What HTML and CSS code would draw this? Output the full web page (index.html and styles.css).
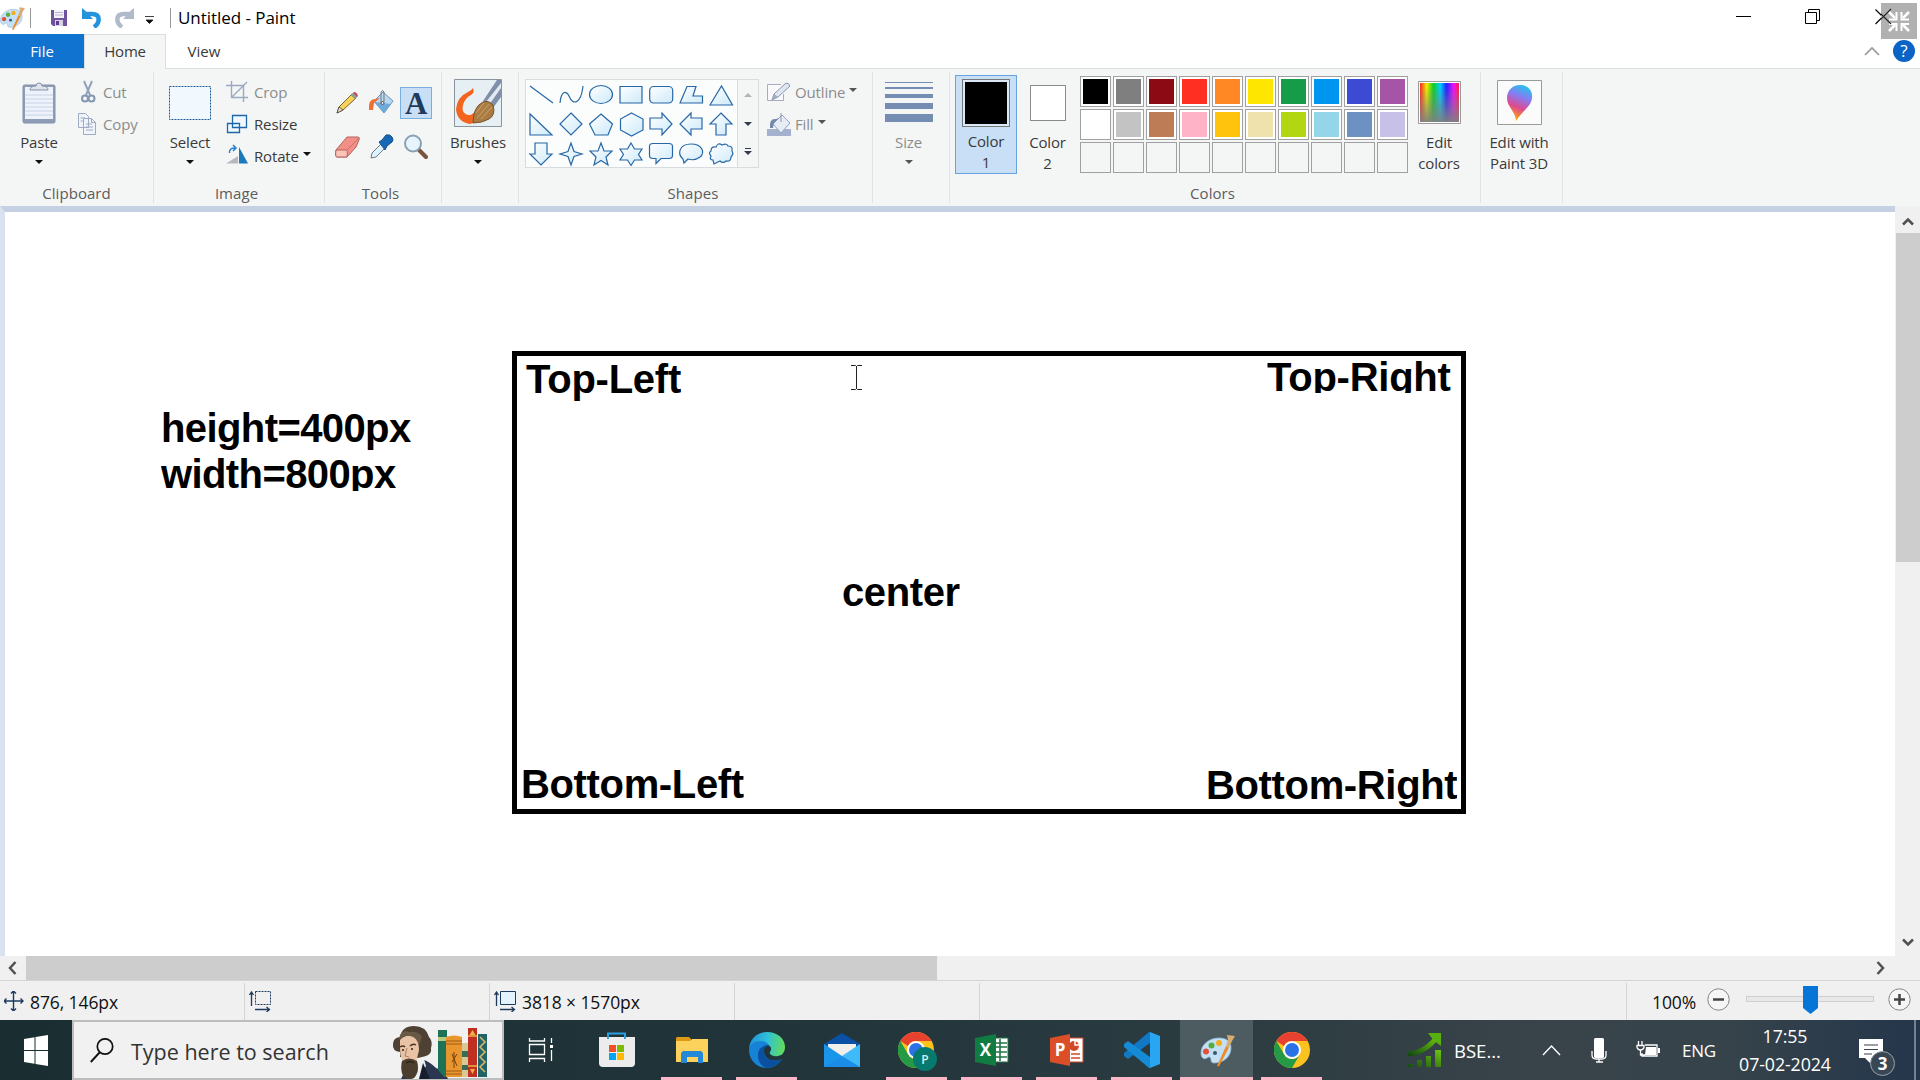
FILE: index.html
```html
<!DOCTYPE html>
<html lang="en">
<head>
<meta charset="utf-8">
<title>Untitled - Paint</title>
<link rel="stylesheet" href="styles.css">
</head>
<body>
<svg width="0" height="0" class="defs" aria-hidden="true">
  <defs>
    <linearGradient id="gShape" x1="0" y1="0" x2="1" y2="1"><stop offset="0" stop-color="#fff"/><stop offset="1" stop-color="#cdeafa"/></linearGradient>
    <linearGradient id="gEdge" x1="0" y1="0.3" x2="1" y2="0.4"><stop offset="0" stop-color="#1f8fd8"/><stop offset=".5" stop-color="#2fc0d8"/><stop offset="1" stop-color="#62dc5a"/></linearGradient>
    <linearGradient id="gGreen" x1="0" y1="1" x2="1" y2="0"><stop offset="0" stop-color="#144a12"/><stop offset="1" stop-color="#6cc80c"/></linearGradient>
    <linearGradient id="gRain" x1="0" y1="0" x2="1" y2="0"><stop offset="0" stop-color="#f22"/><stop offset=".17" stop-color="#ee0"/><stop offset=".34" stop-color="#1c2"/><stop offset=".52" stop-color="#0cf"/><stop offset=".68" stop-color="#22f"/><stop offset=".86" stop-color="#e1f"/><stop offset="1" stop-color="#f24"/></linearGradient>
    <linearGradient id="gFade" x1="0" y1="0" x2="0" y2="1"><stop offset=".1" stop-color="#808080" stop-opacity="0"/><stop offset="1" stop-color="#808080" stop-opacity=".95"/></linearGradient>
    <linearGradient id="gDrop" x1=".7" y1="0" x2=".4" y2="1"><stop offset="0" stop-color="#22c5ee"/><stop offset=".35" stop-color="#8a7af0"/><stop offset=".65" stop-color="#e04a8c"/><stop offset="1" stop-color="#ffb000"/></linearGradient>
    <symbol id="palette" viewBox="0 0 36 36">
      <path d="M2 21C2 12 11 6 20 6c8 0 12 4 12 10 0 9-8 15-17 15-2 0-3-1-3-3 0-3-2-4-4-2-3 2-6 0-6-5z" fill="#c3e0f5" stroke="#8fb7d8" stroke-width=".8"/>
      <circle cx="7" cy="19.500" r="3" fill="#e05138"/><circle cx="12.500" cy="13.500" r="3" fill="#56ae3c"/><circle cx="20" cy="11" r="3" fill="#f5ab20"/><circle cx="16" cy="21" r="2" fill="#37576b"/>
      <path d="M18 34 27 14l3 1.500L20 34.500z" fill="#ee8c2c"/><path d="M27 14l2-6-1-5 8 1-3 5-3 6.500z" fill="#d8ad74"/>
    </symbol>
    <symbol id="chrome" viewBox="0 0 36 36">
      <circle cx="18" cy="18" r="18" fill="#fcc31f"/>
      <path d="M2.400 9A18 18 0 0 1 33.600 9H18a9 9 0 0 0-8 5z" fill="#e8412f"/>
      <path d="M2.400 9A18 18 0 0 0 18 36l7.800-13.500A9 9 0 0 1 10.200 22.500z" fill="#249a47"/>
      <circle cx="18" cy="18" r="9" fill="#fff"/><circle cx="18" cy="18" r="7" fill="#2b72e6"/>
    </symbol>
  </defs>
</svg>

<div class="window">
  <header class="titlebar">
    <svg class="app" width="25" height="26"><use href="#palette" x="-1" y="0" width="26" height="26"/></svg>
    <i class="sep"></i>
    <svg class="save" width="16" height="16" viewBox="0 0 16 16"><path d="M0 0h16v16H2L0 14z" fill="#70529f"/><path d="M3 0h10v8H3z" fill="#f4f2f8"/><path d="M4 2.500h8M4 5h8" stroke="#b9b0cb"/><path d="M4 10h8v6H4z" fill="#d9d2e6"/><path d="M5 11h3v4H5z" fill="#5b3f8a"/></svg>
    <svg class="undo" width="20" height="20" viewBox="0 0 20 20"><path d="M5 6h5c9 0 8 9 2 13" fill="none" stroke="#2493dd" stroke-width="4.500"/><path d="M0 0v11h11L8 8l3-4-5 1z" fill="#2493dd"/></svg>
    <svg class="redo" width="20" height="20" viewBox="0 0 20 20"><path d="M15 6h-5c-9 0-8 9-2 13" fill="none" stroke="#b0bacb" stroke-width="4.500"/><path d="M20 0v11H9l3-3-3-4 5 1z" fill="#b0bacb"/></svg>
    <svg class="more" width="9" height="8" viewBox="0 0 9 8"><path d="M0 .5h9M1 4h7L4.500 7.500z" fill="#111" stroke="#111" stroke-width=".8"/></svg>
    <i class="sep"></i>
    <span class="title">Untitled - Paint</span>
    <div class="controls">
      <svg width="16" height="16"><path d="M0 7.500h15" stroke="#000"/></svg>
      <svg width="16" height="16"><path d="M.5 3.500h11v11H.5zM3.500 3V.5h11v11H12" fill="none" stroke="#000"/></svg>
      <svg class="close" width="16" height="16"><path d="M.5.5l14.500 14.500M15 .5L.5 15" stroke="#000" stroke-width="1.100"/></svg>
    </div>
    <svg class="shrink" width="36" height="36" viewBox="0 0 36 36"><path fill="#b1b1b1" d="M0 0h36v36H0z"/><path d="M8 9l6 6M28 9l-6 6M8 28l6-6M28 28l-6-6" stroke="#fff" stroke-width="2.600"/><path d="M15.500 9v7.500H8M20.500 9v7.500H28M15.500 28v-7H8M20.500 28v-7H28" fill="none" stroke="#fff" stroke-width="2"/><path d="M0 11l10 10M10 6L0 16" stroke="#222" stroke-width="1.100"/></svg>
  </header>

  <nav class="tabs">
    <span class="tab file">File</span><span class="tab home">Home</span><span class="tab view">View</span>
    <svg class="collapse" width="16" height="10"><path d="M1 9l7-7 7 7" fill="none" stroke="#999" stroke-width="1.700"/></svg>
    <span class="help">?</span>
  </nav>

  <section class="ribbon">
    <div class="group clipboard">
      <div class="tools-row">
        <div class="big"><div class="pic"><svg width="34" height="42" viewBox="0 0 34 42"><rect x="1" y="3" width="32" height="38" rx="1.500" fill="#8f9cb5" stroke="#8592ab"/><path d="M3 5h28v32H3z" fill="#eef3fb"/><path d="M3 13h28M3 17h28M3 21h28M3 25h28M3 29h28M3 33h28" stroke="#c6d2e4"/><path d="M8 8q0-4 6-4a3 3 0 0 1 6 0q6 0 6 4z" fill="#dfe4ec" stroke="#8592ab"/></svg></div><span>Paste</span><i class="arrow"></i></div>
        <div class="col dim">
          <div class="cmd"><svg width="24" height="24" viewBox="0 0 24 24"><path d="M8 1l6 14M16 1l-6 14" stroke="#92a2bc" stroke-width="2"/><circle cx="9" cy="18.500" r="3" fill="none" stroke="#8595b4" stroke-width="2"/><circle cx="15.500" cy="18.500" r="3" fill="none" stroke="#8595b4" stroke-width="2"/></svg>Cut</div>
          <div class="cmd"><svg width="24" height="24" viewBox="0 0 24 24"><path d="M2.500 1.500h7l3 3v11h-10zM7.500 6.500h8l4 4v12h-12z" fill="#f1f4fa" stroke="#9fabc3"/><path d="M15.500 6.500v4h4M10 12h6M10 15h7M10 18h7M4.500 6H9M4.500 9H7" fill="none" stroke="#9fabc3"/></svg>Copy</div>
        </div>
      </div>
      <div class="caption">Clipboard</div>
    </div>

    <div class="group image">
      <div class="tools-row">
        <div class="big"><div class="pic"><svg width="42" height="34"><path d="M.5.5h41v33H.5z" fill="#f2f9fe" stroke="#1d5d9b" stroke-dasharray="2 1"/></svg></div><span>Select</span><i class="arrow"></i></div>
        <div class="col">
          <div class="cmd dim"><svg width="24" height="24" viewBox="0 0 24 24"><path d="M0 5.500h17.500V22M5.500 1v16.500H22M5.500 17.500L21 2" fill="none" stroke="#9aa8c0" stroke-width="1.400"/></svg>Crop</div>
          <div class="cmd"><svg width="24" height="24" viewBox="0 0 24 24"><path d="M1.500 11.500h12v9h-12zM6.500 3.500h14v12h-14z" fill="#eef8fe" stroke="#1f66a8" stroke-width="1.300"/></svg>Resize</div>
          <div class="cmd"><svg width="24" height="24" viewBox="0 0 24 24"><path d="M0 19.500L12 12v7.500z" fill="#b6bac0"/><path d="M13 3l9 16.500h-9z" fill="#1979ba"/><path d="M3.500 9Q3 4 9 4M7 1l3 3-3 3" fill="none" stroke="#2781d0" stroke-width="1.500"/></svg>Rotate<i class="arrow side"></i></div>
        </div>
      </div>
      <div class="caption">Image</div>
    </div>

    <div class="group tools">
      <div class="tool-grid">
        <svg viewBox="0 0 32 32"><path d="M5 26l2-6L20 7l4 4-13 12z" fill="#f7d257" stroke="#7b6335"/><path d="M5 26l2-6 4 3z" fill="#f1dfc3" stroke="#444" stroke-width=".8"/><path d="M19 8l3-3q3 0 4 4l-3 3z" fill="#c64b63"/><path d="M19 8l2-2 4 4-2 2z" fill="#86a78a"/></svg>
        <svg viewBox="0 0 32 32"><path d="M8 14l9-9 10 9-9 12z" fill="#b8d8f2" stroke="#6b93b7"/><path d="M8 15l17 2-7 9z" fill="#6fa9db"/><path d="M3 23q-1-11 6-11l5-1-6 5-1 7z" fill="#ee6f33"/><path d="M15 16V5q2-3 3 0v10" fill="none" stroke="#777"/><circle cx="16.500" cy="16" r="1.500" fill="#eee" stroke="#555"/></svg>
        <div class="text-tool">A</div>
        <svg viewBox="0 0 32 32"><path d="M4 19L15 6h11q2 0 1 3l-3 7L15 26H5q-2 0-1-7z" fill="#f28f87" stroke="#b3625d"/><path d="M4 19h10q2 0 1 7H5q-2 0-1-7z" fill="#fac4b7" stroke="#b3625d"/><path d="M15 19L27 7" stroke="#c8736b"/></svg>
        <svg viewBox="0 0 32 32"><path d="M5 27l1-5 9-9 4 4-9 9z" fill="#dff2fb" stroke="#667d91"/><path d="M13 11l3-2 4-5q4-1 6 2t0 5l-5 4-2 4z" fill="#1668b6" stroke="#17518c"/></svg>
        <svg viewBox="0 0 32 32"><path d="M18 18l8 8" stroke="#76553c" stroke-width="4" stroke-linecap="round"/><circle cx="13" cy="12.500" r="8" fill="#e5f4fd" stroke="#8b9fb2" stroke-width="2"/></svg>
      </div>
      <div class="caption">Tools</div>
    </div>

    <div class="group brushes">
      <div class="big"><div class="pic"><svg width="48" height="48" viewBox="0 0 48 48"><path d="M.5.5h47v47H.5z" fill="#e6eff3" stroke="#8b949c"/><path d="M29 22L43 1h4v17L39 29z" fill="#7f90a8"/><path d="M32 23L47 4v5L35 26z" fill="#e3eaf1"/><path d="M19 9q-1 2-5 4Q3 18 2 30q1 13 14 15l9-3-2-13q-4 8-9 7-7-2-5-10 2-7 8-10 4-2 2-7z" fill="#f3641f"/><path d="M19 44q0-16 10-21 6-2 10 3 3 10-4 14-7 4-16 4z" fill="#a97c44" stroke="#75532e"/><path d="M23 39l12-14M27 40l11-12M22 34l8-10" stroke="#d0a468"/></svg></div><span>Brushes</span><i class="arrow"></i></div>
    </div>

    <div class="group shapes">
      <div class="tools-row">
        <div class="gallery">
          <div class="shape-grid">
            <svg viewBox="0 0 24 24"><path d="M1 3l23 17"/></svg>
            <svg viewBox="0 0 24 24"><path fill="none" d="M1 20C2 8 7 7 10 13c4 10 12 8 14-10"/></svg>
            <svg viewBox="0 0 24 24"><ellipse cx="12" cy="11.500" rx="11.500" ry="9"/></svg>
            <svg viewBox="0 0 24 24"><path d="M1 3.500h22v16.500H1z"/></svg>
            <svg viewBox="0 0 24 24"><rect x=".7" y="3.500" width="23" height="16.500" rx="4"/></svg>
            <svg viewBox="0 0 24 24"><path d="M1 20L8 3.500h9L14 13h9.500v7z"/></svg>
            <svg viewBox="0 0 24 24"><path d="M1 22L12.500 3 23.500 22z"/></svg>
            <svg viewBox="0 0 24 24"><path d="M1 2v21h22z"/></svg>
            <svg viewBox="0 0 24 24"><path d="M12 1l11 11-11 11L1 12z"/></svg>
            <svg viewBox="0 0 24 24"><path d="M12 2l11.500 10L19 23H6L.5 12z"/></svg>
            <svg viewBox="0 0 24 24"><path d="M12.500 1L24 7v11l-11.500 6L1.500 18V7z"/></svg>
            <svg viewBox="0 0 24 24"><path d="M1 6h12V1l10 11-10 11v-6H1z"/></svg>
            <svg viewBox="0 0 24 24"><path d="M23 6H12V1L1 12l11 11v-6h11z"/></svg>
            <svg viewBox="0 0 24 24"><path d="M12 1l11 11h-6v11H7V12H1z"/></svg>
            <svg viewBox="0 0 24 24"><path d="M6 1h12v11h5L12 23 1 12h5z"/></svg>
            <svg viewBox="0 0 24 24"><path d="M12 1l3 8.500 8 2.500-8 2.500L12 23l-3-8.500L1 12l8-2.500z"/></svg>
            <svg viewBox="0 0 24 24"><path d="M12 1l3 8h8l-6 6 2 8-7-4.500L5 23l2-8L1 9h8z"/></svg>
            <svg viewBox="0 0 24 24"><path d="M12 1l3.500 6H23l-3.500 5.500L23 18h-7.500L12 23.500 8.500 18H1l3.500-5.500L1 7h7.500z"/></svg>
            <svg viewBox="0 0 24 24"><path d="M4 1.500h16q3.500 0 3.500 3v9q0 3-3.500 3h-8L7 21.500v-5H4q-3.500 0-3.500-3v-9q0-3 3.500-3z"/></svg>
            <svg viewBox="0 0 24 24"><path d="M4 17C-2 12 0 2 12 2s14 9 9 13c-4 3-9 3-12 2l-4 4z"/></svg>
            <svg viewBox="0 0 24 24"><path d="M4 18q-4 0-2-4-3-3 0-5 0-5 5-4 2-5 6-2 5-2 6 1 5 0 4 5 2 3-1 6 0 5-5 4-3 3-6 0l-6 3z"/></svg>
          </div>
          <div class="scroller"><i class="arrow up"></i><i class="arrow"></i><i class="arrow bar"></i></div>
        </div>
        <div class="col dim">
          <div class="cmd"><svg width="24" height="24" viewBox="0 0 24 24"><path d="M14 4.500H.5v16h16V14" fill="#fafafc" stroke="#a7abc5"/><path d="M5 20l2-6L19 3q3 0 4 3L11 17z" fill="#dfe6f2" stroke="#8695b2"/><path d="M5 20l2-6 4 3z" fill="#a0abc2"/></svg>Outline<i class="arrow side grey"></i></div>
          <div class="cmd"><svg width="24" height="24" viewBox="0 0 24 24"><path d="M0 17h24v7H0z" fill="#a4b2d0"/><path d="M6 12l9-9 8 8-9 10z" fill="#e7edf7" stroke="#94a2bd"/><path d="M3 16q-1-10 6-9l3-1-5 5-1 5z" fill="#7788ad"/><path d="M14 10V1" stroke="#8896b0"/></svg>Fill<i class="arrow side grey"></i></div>
        </div>
      </div>
      <div class="caption">Shapes</div>
    </div>

    <div class="group size">
      <div class="big dim"><div class="pic"><svg width="48" height="42"><path d="M0 0h48v1H0zM0 5h48v2H0zM0 12h48v4H0zM0 21h48v6H0zM0 32h48v8H0z" fill="#758cb3"/></svg></div><span>Size</span><i class="arrow grey"></i></div>
    </div>

    <div class="group colors">
      <div class="tools-row">
        <div class="big picked"><div class="pic"><i class="swatch one"></i></div><span>Color<br>1</span></div>
        <div class="big second"><div class="pic"><i class="swatch two"></i></div><span>Color<br>2</span></div>
        <div class="swatches">
          <i class="k0"></i><i class="k1"></i><i class="k2"></i><i class="k3"></i><i class="k4"></i><i class="k5"></i><i class="k6"></i><i class="k7"></i><i class="k8"></i><i class="k9"></i>
          <i class="l0"></i><i class="l1"></i><i class="l2"></i><i class="l3"></i><i class="l4"></i><i class="l5"></i><i class="l6"></i><i class="l7"></i><i class="l8"></i><i class="l9"></i>
          <i class="none"></i><i class="none"></i><i class="none"></i><i class="none"></i><i class="none"></i><i class="none"></i><i class="none"></i><i class="none"></i><i class="none"></i><i class="none"></i>
        </div>
        <div class="big edit"><div class="pic"><svg width="43" height="43"><path d="M.5.5h42v42H.5z" fill="#fff" stroke="#999"/><path d="M2 2h39v39H2z" fill="url(#gRain)"/><path d="M2 2h39v39H2z" fill="url(#gFade)"/></svg></div><span>Edit<br>colors</span></div>
      </div>
      <div class="caption">Colors</div>
    </div>

    <div class="group threed">
      <div class="big"><div class="pic"><svg width="45" height="45"><path d="M.5.5h44v44H.5z" fill="#fbfbfb" stroke="#999"/><path d="M23 5c8 0 13 6 12 13-1 9-10 13-16 23 0-9-9-14-9-23 0-7 5-13 13-13z" fill="url(#gDrop)"/></svg></div><span>Edit with<br>Paint 3D</span></div>
    </div>
  </section>

  <main class="work">
    <div class="canvas">
      <div class="note dims">height=400px<br>width=800px</div>
      <div class="frame"></div>
      <div class="note top-left">Top-Left</div>
      <div class="note top-right">Top-Right</div>
      <div class="note center">center</div>
      <div class="note bottom-left">Bottom-Left</div>
      <div class="note bottom-right">Bottom-Right</div>
      <svg class="cursor" width="11" height="25"><path d="M0 .5h4.500l1 1 1-1H11M5.500 1v23M0 24.500h4.500l1-1 1 1H11" fill="none" stroke="#222"/></svg>
    </div>
    <div class="vscroll">
      <svg width="12" height="9"><path d="M1 7.500l5-5 5 5" fill="none" stroke="#505050" stroke-width="2.500"/></svg>
      <i class="thumb"></i>
      <svg width="12" height="9"><path d="M1 1.500l5 5 5-5" fill="none" stroke="#505050" stroke-width="2.500"/></svg>
    </div>
  </main>
  <div class="hscroll">
    <svg width="9" height="14"><path d="M7.500 1l-5.500 6 5.500 6" fill="none" stroke="#505050" stroke-width="2.500"/></svg>
    <i class="thumb"></i>
    <svg class="right" width="9" height="14"><path d="M1.500 1L7 7l-5.500 6" fill="none" stroke="#505050" stroke-width="2.500"/></svg>
  </div>

  <footer class="status">
    <div class="cell first"><svg width="20" height="20" viewBox="0 0 20 20"><path d="M0 10h19M9.500 0v20M2.500 7.500L0 10l2.500 2.500M16.500 7.500L19 10l-2.500 2.500M7 2.500L9.500 0 12 2.500M7 17.500L9.500 20l2.500-2.500" fill="none" stroke="#1d3a5f" stroke-width="1.400"/></svg><span>876, 146px</span></div>
    <div class="cell"><svg width="22" height="21" viewBox="0 0 22 21"><path d="M6.500.5h15v13h-15z" fill="none" stroke="#1d3a5f" stroke-dasharray="2 1"/><path d="M2.500 15V1M.5 4l2-3 2 3M6 18.500h14M17.500 16l3 2.500-3 2.500" fill="none" stroke="#1d3a5f" stroke-width="1.300"/></svg></div>
    <div class="cell"><svg width="22" height="21" viewBox="0 0 22 21"><path d="M6.500.5h15v13h-15z" fill="#e2f3fd" stroke="#1d3a5f"/><path d="M2.500 15V1M.5 4l2-3 2 3M6 18.500h14M17.500 16l3 2.500-3 2.500" fill="none" stroke="#1d3a5f" stroke-width="1.300"/></svg><span>3818 × 1570px</span></div>
    <div class="cell"></div>
    <div class="cell wide"></div>
    <div class="zoom"><span class="percent">100%</span>
      <svg class="minus" width="23" height="23"><circle cx="11.500" cy="11.500" r="10.700" fill="#f6f6f6" stroke="#858585"/><path d="M6 11.500h11" stroke="#444" stroke-width="2.500"/></svg>
      <div class="track"><svg width="15" height="28"><path d="M0 0h15v22l-7.500 6L0 22z" fill="#0675d8"/></svg></div>
      <svg class="plus" width="23" height="23"><circle cx="11.500" cy="11.500" r="10.700" fill="#f6f6f6" stroke="#858585"/><path d="M6 11.500h11M11.500 6v11" stroke="#444" stroke-width="2.500"/></svg>
    </div>
  </footer>
</div>

<div class="taskbar">
  <div class="start"><svg width="24" height="31" viewBox="0 0 24 31"><path d="M0 4l10.500-1.800V15H0zM11.500 2L24 0v15H11.500zM0 16h10.500v12.800L0 27zM11.500 16H24v15l-12.500-2z" fill="#fff"/></svg></div>
  <div class="search">
    <svg width="24" height="25"><circle cx="15" cy="8.500" r="7.700" fill="none" stroke="#111" stroke-width="1.700"/><path d="M10 14L.8 24" stroke="#111" stroke-width="1.900"/></svg>
    <span>Type here to search</span>
    <svg class="author" width="96" height="54" viewBox="0 0 96 54">
      <path d="M9 54l3-6 20-13q6 2 12 8 9 2 12 11z" fill="#2b3650"/>
      <path d="M18 54l2-12 12-8 2 7-7 13z" fill="#eef0f2"/><path d="M31 38l7 16H27z" fill="#161e2d"/>
      <path d="M8 12Q10 1 22 1q12 0 15 11 4 4 2 11 1 6-5 8l-8 2L8 32q1-3 0-5-8-1-7-8 0-6 7-7z" fill="#4d4133"/>
      <path d="M8 15q5-6 14-4 5 3 5 14l-3 13-12 1Q8 32 8 23z" fill="#e9c3a5"/>
      <path d="M7 15Q8 4 17 7q10-1 13 5l-3 9q-2-9-9-10-6-1-11 4z" fill="#685845"/>
      <path d="M8 22q3-2 5 0m5-1q3-3 6-1" fill="none" stroke="#4b3426" stroke-width="1.400"/>
      <circle cx="11" cy="25" r="1" fill="#2b211b"/><circle cx="20" cy="24" r="1" fill="#2b211b"/>
      <path d="M15 23l-2 8 4 1" fill="none" stroke="#b37c5f"/>
      <path d="M10 36q7-5 15 0 3 11-3 17-7 3-11-2-3-7-1-15z" fill="#4b3e2e"/><path d="M14 38q4-3 8 0" fill="none" stroke="#2b2119" stroke-width="1.500"/>
      <path d="M46 5h9v47H52l-6-7z" fill="#1d7257"/><path d="M46 12h9v4h-9z" fill="#b5ca80"/>
      <path d="M54 12q8-3 16 0v40H54z" fill="#e9962e"/><path d="M54 16h16M54 19h16M54 46h16M54 49h16" stroke="#a25a12"/><path d="M60 29l5 12m0-12l-5 8M62 27v16" stroke="#74420c"/>
      <path d="M70 18h6v34h-6z" fill="#d9c893"/><path d="M70 26h6v6h-6zM70 40h6v5h-6z" fill="#356e58"/>
      <path d="M76 3h9v49h-9z" fill="#bf3023"/><path d="M76 11h9M76 41h9" stroke="#efb345" stroke-width="1.500"/><path d="M80.500 5l3 5h-6zM78 44h5l-2.500 5z" fill="#efb345"/>
      <path d="M86 9h9v43h-9z" fill="#20646a"/><path d="M88 12l5 5-5 5 5 5-5 5 5 5-5 5 5 5" fill="none" stroke="#d0b463" stroke-width="1.700"/>
    </svg>
  </div>
  <div class="apps">
    <div class="app-btn"><svg width="28" height="24" viewBox="0 0 28 24"><path d="M1.500 0v3h15V0M1.500 24v-3.500h15V24M1.500 6.500h15v10h-15zM23.500 0v5M23.500 12v11" fill="none" stroke="#fff" stroke-width="1.300"/><path d="M22 7h3v3h-3z" fill="#fff"/></svg></div>
    <div class="app-btn"><svg width="36" height="36" viewBox="0 0 36 36"><path d="M0 5h36v26q0 4-4 4H4q-4 0-4-4z" fill="#ececec"/><path d="M9 7V1.500h17V7" fill="none" stroke="#2aa0e0" stroke-width="2"/><path d="M10 13h7v7h-7z" fill="#f25022"/><path d="M18 13h7v7h-7z" fill="#7fba00"/><path d="M10 21h7v7h-7z" fill="#00a4ef"/><path d="M18 21h7v7h-7z" fill="#ffb900"/></svg></div>
    <div class="app-btn run"><svg width="32" height="28" viewBox="0 0 32 28"><path d="M0 2l1-1h12l2 2v3H0z" fill="#dd9b14"/><path d="M0 5h14l2-2h16v23H0z" fill="#fdd25c"/><path d="M5 27V17l2-2h18l2 2v10h-5v-6H11v6z" fill="#2488d8"/></svg></div>
    <div class="app-btn run"><svg width="36" height="36" viewBox="0 0 36 36"><path d="M0 18C0 7 8 0 18 0c11 0 18 7 18 15 0 7-5 10-11 9-3-1-5-2-4-4 2-3 1-6-2-7C12 9 2 9 0 18z" fill="url(#gEdge)"/><path d="M0 18C2 7 16 7 20 13c-3 0-6 3-5 7 1 7 9 11 18 7-4 6-9 9-15 9C8 36 0 28 0 18z" fill="#1683d6"/><path d="M9 23c0-6 4-9 9-10l2 .5c-3 1-6 3-5 7 1 7 9 10 18 6.500-4 6-9 9-15 9-5-1-9-6-9-13z" fill="#0b4f9f"/></svg></div>
    <div class="app-btn"><svg width="36" height="34" viewBox="0 0 36 34"><path d="M0 11L18 0l18 11v6H0z" fill="#0b50a4"/><path d="M4 11h28v12H4z" fill="#f1eeec"/><path d="M0 11l18 12v11H0z" fill="#1996ea"/><path d="M36 11v23H18V23z" fill="#40b9f8"/><path d="M0 34l18-11 18 11z" fill="#1b8de6"/></svg></div>
    <div class="app-btn run"><svg width="39" height="39" class="overhang"><use href="#chrome" width="36" height="36"/><circle cx="27" cy="27" r="12" fill="#08796e"/><text x="27" y="31.500" text-anchor="middle" class="badge-p">P</text></svg></div>
    <div class="app-btn run"><svg width="34" height="32" viewBox="0 0 34 32"><path d="M18 4h15v24H18z" fill="#fff" stroke="#217346"/><path d="M19 9h13M19 13h13M19 18h13M19 23h13M25 5v22" stroke="#217346" stroke-width="1.600"/><path d="M0 4l21-4v32L0 28z" fill="#107c41"/><text x="10.500" y="22" text-anchor="middle" class="office">X</text></svg></div>
    <div class="app-btn run"><svg width="34" height="32" viewBox="0 0 34 32"><path d="M18 4h15v24H18z" fill="#fff" stroke="#d24726"/><circle cx="24" cy="12" r="5" fill="#d24726"/><path d="M25 6v5h5" fill="none" stroke="#fff" stroke-width="1.500"/><path d="M21 20h9M21 24h9" stroke="#d24726" stroke-width="1.600"/><path d="M0 4l20-4v32L0 28z" fill="#dc4e27"/><text x="10" y="22" text-anchor="middle" class="office">P</text></svg></div>
    <div class="app-btn run"><svg width="36" height="36" viewBox="0 0 36 36"><path d="M26 0v11L4 27l-4-3v-3L25 0z" fill="#1277c4"/><path d="M26 36V25L4 9 0 12v3l25 21z" fill="#158bd6"/><path d="M26 0l10 4v28l-10 4z" fill="#29a6f2"/></svg></div>
    <div class="app-btn run active"><svg width="36" height="36"><use href="#palette" width="36" height="36"/></svg></div>
    <div class="app-btn run"><svg width="36" height="36"><use href="#chrome" width="36" height="36"/></svg></div>
  </div>
  <div class="tray">
    <svg class="stock" width="36" height="36" viewBox="0 0 36 36"><path d="M2 22Q19 21 31 5" fill="none" stroke="url(#gGreen)" stroke-width="5"/><path d="M22 1h13v13l-4-3-6-6z" fill="#58b010"/><path d="M2 32h5v3H2zM11 28h5v7h-5zM20 24h5v11h-5zM29 18h6v17h-6z" fill="url(#gGreen)"/></svg>
    <span class="bse">BSE...</span>
    <svg class="caret" width="19" height="12"><path d="M1 11l8.500-9 8.500 9" fill="none" stroke="#fff" stroke-width="1.400"/></svg>
    <svg class="mic" width="16" height="25"><rect x="3" width="10" height="20" rx="1.500" fill="#fff"/><path d="M1 13v4q0 4 4 4h6q4 0 4-4v-4M8 21v3M5 24h7" fill="none" stroke="#fff" stroke-width="1.300"/></svg>
    <svg class="battery" width="25" height="18"><path d="M9 4h12v11H6v-3" fill="none" stroke="#fff" stroke-width="1.300"/><path d="M10 6h10v8H9zM22 7h2v5h-2z" fill="#fff"/><path d="M2.500 0v4M6 0v4M1 4.500h7v2Q7 9 4.500 9T1 6.500zM4.500 9v5H9" fill="none" stroke="#fff" stroke-width="1.300"/></svg>
    <span class="lang">ENG</span>
    <div class="clock"><span>17:55</span><span>07-02-2024</span></div>
    <svg class="notif" width="38" height="40"><path d="M0 0h24v19H12v6l-6-6H0z" fill="#fff"/><path d="M5 6h14M5 10.500h14M5 15h8" stroke="#344150" stroke-width="1.200"/><circle cx="23.500" cy="24.500" r="12" fill="#394755" stroke="#98a0a8"/><text x="23.500" y="31" text-anchor="middle" class="badge-3">3</text></svg>
    <i class="peek"></i>
  </div>
</div>
</body>
</html>
```
FILE: styles.css
```css
* { box-sizing: border-box; }
body { margin: 0; width: 1920px; height: 1080px; overflow: hidden; background: #fff; font: 15px/20px "Open Sans", "Noto Sans", sans-serif; color: #3a3a3a; }
svg { display: block; flex: none; }
.defs { position: absolute; }
i { display: block; flex: none; }
.window { height: 1020px; display: flex; flex-direction: column; }

/* title bar */
.titlebar { height: 34px; flex: none; display: flex; align-items: center; padding-top: 1px; position: relative; }
.sep { width: 1px; height: 20px; background: #999; }
.app { margin-right: 5px; }
.save { margin-left: 20px; }
.undo { margin-left: 15px; }
.redo { margin-left: 12px; }
.more { margin: 4px 16px 0 11px; }
.title { margin-left: 7px; color: #000; font-size: 17px; letter-spacing: -.05px; }
.controls { margin: -1px 0 0 auto; padding-right: 29px; display: flex; gap: 54px; }
.controls svg:first-child { margin-right: -1px; }
.shrink { position: absolute; right: 3px; top: 3px; }

/* tabs */
.tabs { height: 34px; flex: none; display: flex; align-items: center; }
.tab { height: 34px; line-height: 35px; text-align: center; width: 84px; font-size: 15px; }
.file { background: #1073cf; color: #fff; }
.home { width: 82px; height: 35px; background: #f4f6f6; border: 1px solid #dcdddf; border-bottom: 0; line-height: 33px; z-index: 1; margin-top: 1px; letter-spacing: -.2px; }
.view { width: 76px; }
.collapse { margin-left: auto; }
.help { width: 22px; height: 22px; margin: 0 5px 0 13px; border-radius: 50%; background: #0b63c5; color: #fff; font-size: 17px; line-height: 22px; text-align: center; }

/* ribbon */
.ribbon { height: 138px; flex: none; display: flex; background: #f4f6f6; border-top: 1px solid #dcdddf; padding: 3px 0; letter-spacing: -.15px; }
.group { display: flex; flex-direction: column; justify-content: space-between; border-right: 1px solid #e0e2e4; }
.caption { text-align: center; color: #5c5c5c; padding-right: 5px; height: 20px; letter-spacing: .05px; }
.tools-row { display: flex; align-items: flex-start; }
.big { display: flex; flex-direction: column; align-items: center; text-align: center; line-height: 21px; white-space: nowrap; }
.pic { height: 61px; display: flex; align-items: center; justify-content: center; }
.pic + span { margin-top: -1px; }
.arrow { width: 0; height: 0; border: 4px solid transparent; border-top-color: #111; border-bottom: 0; }
.big .arrow { margin-top: 7px; }
.arrow.grey { border-top-color: #555; }
.dim { color: #8c8c8c; }
.col { margin-top: 4px; }
.cmd { height: 32px; display: flex; align-items: center; gap: 4px; white-space: nowrap; }
.cmd .arrow.side { margin: -4px 0 0 0; }

.clipboard { width: 154px; }
.clipboard .caption { padding: 0; }
.clipboard .big { width: 64px; margin: 0 5px 0 7px; }
.clipboard .cmd { gap: 3px; }
.image { width: 171px; }
.image .big { width: 62px; margin: 0 5px 0 5px; }
.tools { width: 117px; }
.tool-grid { display: grid; grid-template-columns: repeat(3, 32px); grid-auto-rows: 32px; gap: 12px 2px; margin: 15px 0 0 7px; }
.text-tool { background: #c9dff6; border: 1px solid #7aaedf; color: #1f3a5c; text-align: center; font: bold 31px/31px "Liberation Serif", serif; }
.brushes { width: 77px; }
.brushes .big { padding-right: 4px; }
.shapes { width: 354px; }
.gallery { width: 234px; height: 89px; margin: 7px 8px 0 6px; display: flex; background: #fbfdfd; border: 1px solid #d9dcdf; }
.shape-grid { width: 211px; display: grid; grid-template-columns: repeat(7, 30px); grid-auto-rows: 29.5px; place-items: center; }
.shape-grid svg { width: 24px; height: 24px; fill: url(#gShape); stroke: #2767a5; stroke-width: 1.200; overflow: visible; }
.scroller { flex: 1; border-left: 1px solid #d9dcdf; background: #f4f6f6; display: flex; flex-direction: column; align-items: center; justify-content: space-around; }
.scroller .arrow { border-top-color: #333d4a; }
.scroller .up { transform: rotate(180deg); border-top-color: #b4b4b4; }
.scroller .bar { box-shadow: 0 -3px 0 -1px #f4f6f6, 0 -4px 0 -1px #333d4a; }
.size { width: 77px; }
.size .big { padding-right: 5px; }
.colors { width: 531px; }
.picked { width: 62px; height: 99px; margin: 3px 0 0 5px; background: #c9dff6; border: 1px solid #66a3e0; }
.picked .pic { height: 54px; }
.picked .pic + span { margin-top: 2px; }
.second { width: 61px; margin-right: 2px; }
.swatch { background: #fff; border: 1px solid #8a8a8a; }
.one { width: 48px; height: 48px; background: #000; border: 1px solid #777; box-shadow: inset 0 0 0 2px #dbe9f7; }
.two { width: 36px; height: 36px; }
.swatches { display: grid; grid-template-columns: repeat(10, 31px); grid-auto-rows: 31px; gap: 2px; margin-top: 4px; }
.swatches i { border: 1px solid #a0a0a0; padding: 2px; background-clip: content-box; box-shadow: inset 0 0 0 2px #fff; }
.swatches .none { box-shadow: none; }
.k0 { background-color: #000; } .k1 { background-color: #7f7f7f; } .k2 { background-color: #8b0a14; } .k3 { background-color: #ff2f21; } .k4 { background-color: #ff8824; }
.k5 { background-color: #ffe600; } .k6 { background-color: #169c48; } .k7 { background-color: #0096f0; } .k8 { background-color: #3b4bd2; } .k9 { background-color: #a654a6; }
.l0 { background-color: #fff; } .l1 { background-color: #c3c3c3; } .l2 { background-color: #bd7c55; } .l3 { background-color: #ffb3c7; } .l4 { background-color: #ffc30e; }
.l5 { background-color: #efe2ac; } .l6 { background-color: #b2d712; } .l7 { background-color: #94d5e9; } .l8 { background-color: #6d92c1; } .l9 { background-color: #c7c1e8; }
.edit { width: 58px; margin-left: 2px; }
.threed { width: 82px; }
.threed .big { padding-right: 5px; }

/* canvas and scroll bars */
.work { height: 750px; flex: none; display: flex; }
.canvas { width: 1895px; position: relative; border-top: 6px solid #c5d1e2; border-left: 5px solid #dae2f1; overflow: hidden; background: #fff; }
.note { position: absolute; font: bold 40px/46px "Liberation Sans", sans-serif; color: #000; white-space: nowrap; overflow: hidden; letter-spacing: -.25px; }
.dims { left: 156px; top: 193px; height: 86px; letter-spacing: -.6px; }
.frame { position: absolute; left: 507px; top: 139px; width: 954px; height: 463px; border: 5px solid #000; }
.top-left { left: 521px; top: 144px; }
.top-right { left: 1262px; top: 142px; height: 39px; }
.center { left: 837px; top: 357px; letter-spacing: -.4px; }
.bottom-left { left: 516px; top: 549px; letter-spacing: -.35px; }
.bottom-right { left: 1201px; top: 550px; letter-spacing: -.35px; }
.cursor { position: absolute; left: 846px; top: 153px; }
.vscroll { flex: 1; background: #f0f0f0; display: flex; flex-direction: column; align-items: center; padding: 11px 0 9px; }
.vscroll .thumb { width: 24px; height: 329px; background: #cdcdcd; margin: 7px 0 auto; }
.hscroll { height: 24px; flex: none; background: #f0f0f0; display: flex; align-items: center; padding-left: 8px; }
.hscroll .thumb { width: 911px; height: 24px; background: #cdcdcd; margin-left: 9px; }
.right { margin: 0 35px 0 auto; }

/* status bar */
.status { height: 40px; flex: none; display: flex; background: #f0f0f0; border-top: 1px solid #d4d4d4; padding-top: 2px; color: #111; font-size: 17.500px; letter-spacing: -.1px; line-height: 38px; white-space: nowrap; }
.cell { width: 245px; border-right: 1px solid #d4d4d4; display: flex; align-items: flex-start; padding-left: 4px; gap: 6px; }
.cell svg { margin-top: 8px; }
.cell.wide { width: 647px; }
.zoom { display: flex; padding-left: 25px; flex: 1; }
.percent { width: 47px; }
.minus { margin: 5px 0 0 8px; }
.track { width: 128px; height: 6px; border: 1px solid #cfcfcf; background: #e8e8e8; margin: 13px 14px 0 16px; display: flex; justify-content: center; align-items: center; }
.track svg { margin-top: 2px; }
.plus { margin-top: 5px; }

/* taskbar */
.taskbar { height: 60px; display: flex; background: linear-gradient(90deg, #1a2e32 0, #20343a 40%, #2d3d42 66%, #39434a 80%, #36434a 90%, #24364c 100%); color: #fff; }
.start { width: 72px; display: flex; align-items: center; justify-content: center; }
.search { width: 432px; border: 2px solid #bcbebe; background: #f1f1f1; display: flex; align-items: center; padding-left: 16px; color: #333; font-size: 21.500px; }
.search span { margin: 3px 0 0 17px; white-space: nowrap; }
.author { margin: 3px 14px 0 auto; }
.apps { display: flex; margin-left: -1px; padding-left: 1px; }
.app-btn { width: 75px; display: flex; align-items: center; justify-content: center; }
.overhang { margin-left: 2px; margin-top: 2px; }
.run { background: linear-gradient(#fcb7c6, #fcb7c6) center bottom / 61px 3px no-repeat; }
.active { background: linear-gradient(#fcb7c6, #fcb7c6) center bottom / 73px 3px no-repeat, linear-gradient(#4c5c61, #4c5c61) center / 73px 60px no-repeat; }
.badge-p { font: 600 12px "Open Sans", sans-serif; fill: #d5efec; }
.office { font: bold 17px "Open Sans", sans-serif; fill: #fff; }
.badge-3 { font: bold 17px "Open Sans", sans-serif; fill: #fff; }
.tray { flex: 1; display: flex; align-items: center; white-space: nowrap; }
.stock { margin-left: 77px; }
.bse { margin: 2px 0 0 12px; font-size: 18.500px; width: 51px; }
.caret { margin-left: 37px; }
.mic { margin-left: 30px; }
.battery { margin-left: 29px; }
.lang { margin: 1px 0 0 21px; width: 37px; font-size: 17px; letter-spacing: -.3px; }
.clock { margin-left: 17px; width: 98px; display: flex; flex-direction: column; align-items: center; line-height: 28px; font-size: 17.800px; letter-spacing: -.1px; }
.notif { margin: 17px 0 0 25px; }
.peek { width: 2px; height: 60px; background: #77818c; margin-left: 17px; }
```
